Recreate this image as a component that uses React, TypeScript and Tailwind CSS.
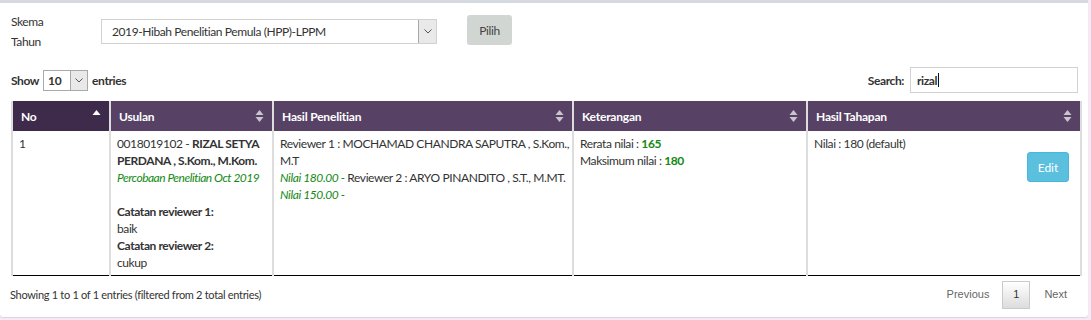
import React from "react";

function SortIcon({ mode }: { mode: "both" | "up" }) {
  return (
    <svg width="9" height="14" viewBox="0 0 9 14" className="shrink-0">
      <polygon points="4.5,1 8.5,6 0.5,6" fill={mode === "up" ? "#ffffff" : "#c9c4cf"} />
      {mode === "both" && <polygon points="0.5,8 8.5,8 4.5,13" fill="#c9c4cf" />}
    </svg>
  );
}

function Th({ label, w, sorted }: { label: string; w: number; sorted?: boolean }) {
  return (
    <th
      style={{ width: w }}
      className={`h-[30px] border-x-2 border-[#dddddd] px-[8px] text-left align-middle font-bold tracking-[-0.2px] text-white ${
        sorted ? "bg-[#3e2b4b]" : "bg-[#574266]"
      }`}
    >
      <div className="flex items-center justify-between">
        <span>{label}</span>
        <SortIcon mode={sorted ? "up" : "both"} />
      </div>
    </th>
  );
}

const cell = "border-x-2 border-[#dddddd] px-[6px] pb-[4px] pt-[4px] whitespace-nowrap";

export default function App() {
  return (
    <div
      className="h-[320px] w-[1091px] overflow-hidden bg-[#f5eaf8] pr-[3px] text-[12px] leading-[17px] tracking-[-0.4px] text-[#333333]"
      style={{ fontFamily: "Lato, 'Liberation Sans', sans-serif" }}
    >
      <div className="h-[317px] rounded-b-[3px] border-t-[3px] border-[#d6d8e2] bg-white px-[10px] shadow-[0_1px_1px_rgba(0,0,0,0.1)]">
        {/* form row */}
        <div className="flex h-[52px] items-start pt-[9px]">
          <div className="w-[91px] pl-[1px] leading-[20px]">
            <div>Skema</div>
            <div>Tahun</div>
          </div>
          <div className="mt-[7px] flex h-[25px] w-[336px] items-center justify-between border border-[#d2d2d2] bg-white pl-[10px]">
            <span className="text-[#333]">2019-Hibah Penelitian Pemula (HPP)-LPPM</span>
            <div className="flex h-[23px] w-[18px] items-center justify-center border-l border-[#a9a9a9] bg-[#e9e9e9]">
              <svg width="8" height="5" viewBox="0 0 8 5">
                <polyline points="0.5,0.5 4,4 7.5,0.5" fill="none" stroke="#555" strokeWidth="1" />
              </svg>
            </div>
          </div>
          <div className="ml-[30px] mt-[3px] flex h-[30px] w-[45px] items-center justify-center rounded-[3px] bg-[#d2d6d2] text-[#444]">
            Pilih
          </div>
        </div>

        {/* show / search row */}
        <div className="flex h-[46px] items-center justify-between pb-[2px] pt-[6px]">
          <div className="flex items-center font-bold">
            <span className="pl-[1px]">Show</span>
            <div className="ml-[4px] mr-[4px] flex h-[21px] w-[45px] items-center justify-between border border-[#a9a9a9] bg-white pl-[4px]">
              <span className="font-bold">10</span>
              <div className="flex h-[19px] w-[17px] items-center justify-center border-l border-[#a9a9a9] bg-[#e9e9e9]">
                <svg width="8" height="5" viewBox="0 0 8 5">
                  <polyline points="0.5,0.5 4,4 7.5,0.5" fill="none" stroke="#555" strokeWidth="1" />
                </svg>
              </div>
            </div>
            <span>entries</span>
          </div>
          <div className="flex items-center">
            <span className="mr-[6px] font-bold">Search:</span>
            <div className="flex h-[26px] w-[168px] items-center border border-[#d2d2d2] pl-[6px] font-bold">
              rizal<span className="ml-[1px] inline-block h-[14px] w-[1px] bg-[#111]" />
            </div>
          </div>
        </div>

        {/* table */}
        <table className="ml-[1px] w-[1069px] table-fixed border-collapse">
          <thead>
            <tr>
              <Th label="No" w={98} sorted />
              <Th label="Usulan" w={163} />
              <Th label="Hasil Penelitian" w={300} />
              <Th label="Keterangan" w={234} />
              <Th label="Hasil Tahapan" w={274} />
            </tr>
          </thead>
          <tbody>
            <tr className="border-b border-black align-top">
              <td className={cell}>1</td>
              <td className={cell}>
                <div>
                  0018019102 - <b>RIZAL SETYA</b>
                </div>
                <div className="font-bold">PERDANA , S.Kom., M.Kom.</div>
                <div className="italic tracking-[-0.5px] text-[#138a13]">Percobaan Penelitian Oct 2019</div>
                <div className="h-[17px]" />
                <div className="font-bold">Catatan reviewer 1:</div>
                <div>baik</div>
                <div className="font-bold">Catatan reviewer 2:</div>
                <div>cukup</div>
              </td>
              <td className={cell}>
                <div>Reviewer 1 : MOCHAMAD CHANDRA SAPUTRA , S.Kom.,</div>
                <div>M.T</div>
                <div>
                  <span className="italic text-[#138a13]">Nilai 180.00 -</span> Reviewer 2 : ARYO PINANDITO , S.T., M.MT.
                </div>
                <div className="italic text-[#138a13]">Nilai 150.00 -</div>
              </td>
              <td className={cell}>
                <div>
                  Rerata nilai : <b className="text-[#138a13]">165</b>
                </div>
                <div>
                  Maksimum nilai : <b className="text-[#138a13]">180</b>
                </div>
              </td>
              <td className={cell}>
                <div>Nilai : 180 (default)</div>
                <div className="flex justify-end pr-[5px]">
                  <div className="flex h-[30px] w-[42px] items-center justify-center rounded-[3px] border border-[#46b8da] bg-[#5bc0de] tracking-normal text-white">
                    Edit
                  </div>
                </div>
              </td>
            </tr>
          </tbody>
        </table>

        {/* footer */}
        <div className="flex h-[36px] items-center justify-between">
          <span className="text-[11px] tracking-[-0.3px]">Showing 1 to 1 of 1 entries (filtered from 2 total entries)</span>
          <div
            className="flex items-center pt-[1px] text-[11px] tracking-normal text-[#666]"
            style={{ fontFamily: "'Liberation Sans', Arial, sans-serif" }}
          >
            <span className="pl-[12px] pr-[13px]">Previous</span>
            <span className="flex h-[28px] w-[28px] items-center justify-center border border-[#cacaca] bg-gradient-to-b from-white to-[#dcdcdc] text-[#333]">
              1
            </span>
            <span className="pl-[14px] pr-[11px]">Next</span>
          </div>
        </div>
      </div>
    </div>
  );
}
